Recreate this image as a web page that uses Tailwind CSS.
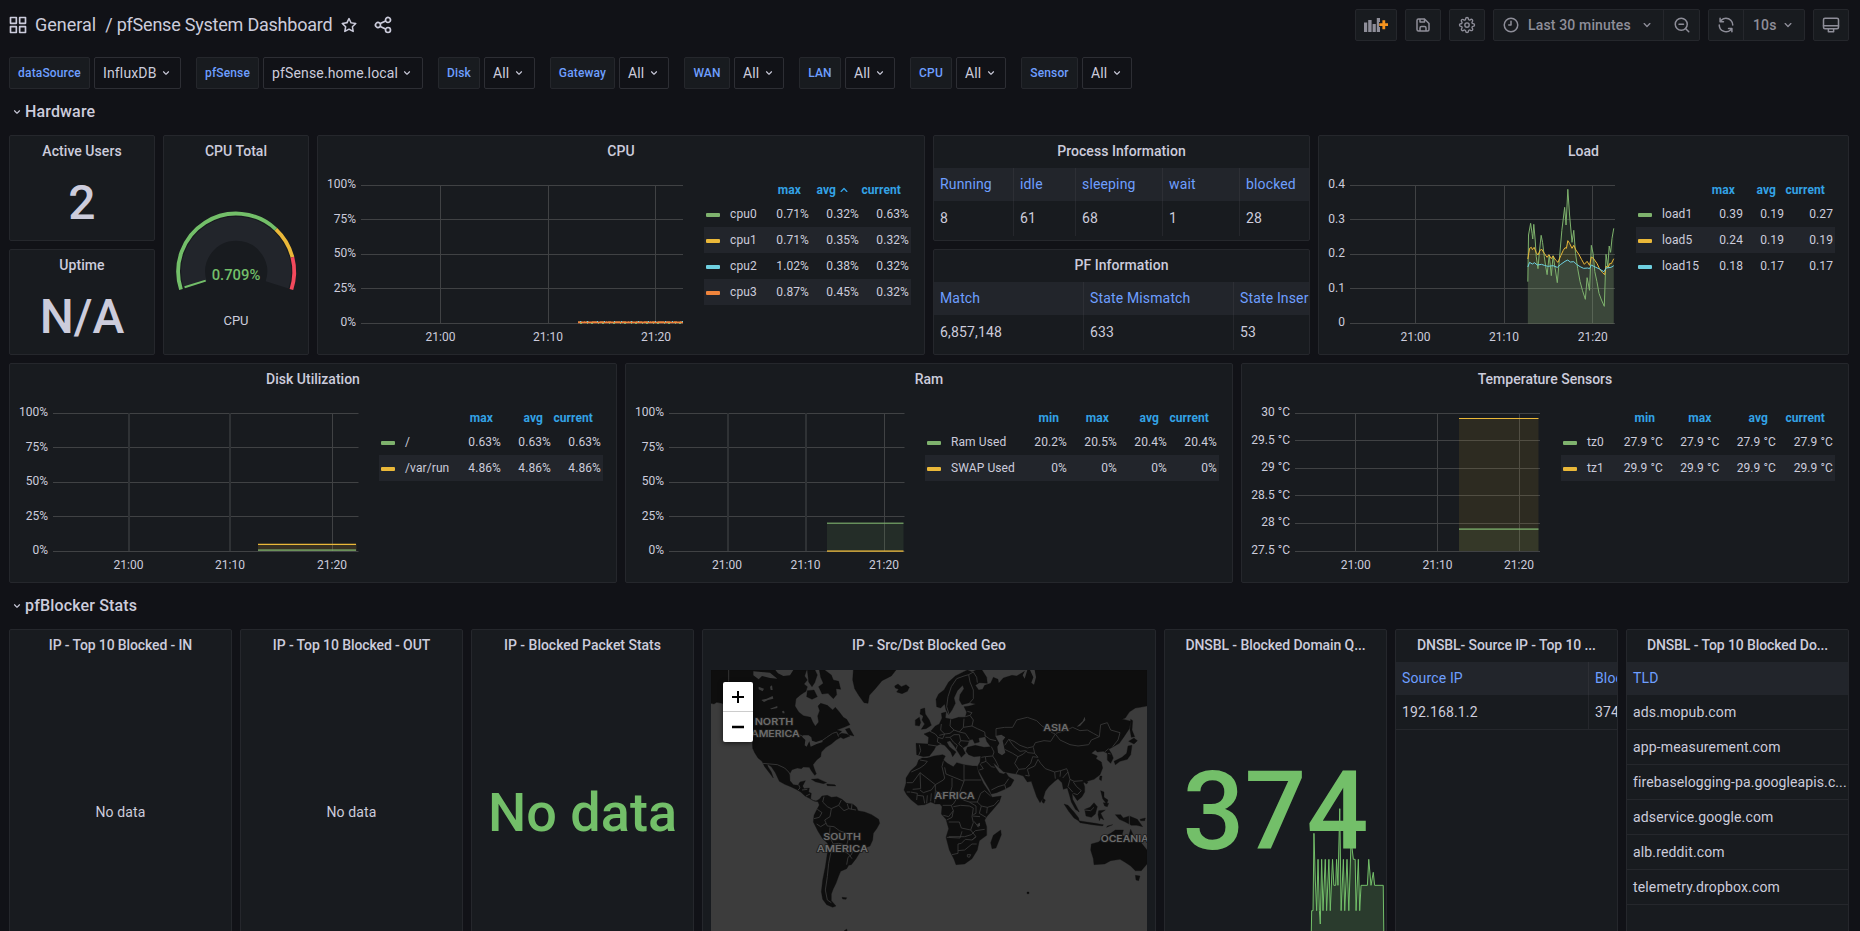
<!DOCTYPE html>
<html lang="en">
<head>
<meta charset="utf-8">
<title>pfSense System Dashboard</title>
<script src="https://cdn.jsdelivr.net/npm/@tailwindcss/browser@4"></script>
</head>
<body class="h-[931px] w-[1860px] overflow-hidden bg-[#111217] font-['Roboto',sans-serif] text-sm tracking-[0.15px] text-[#ccccdc]">

<!-- Icon sprite -->
<svg class="hidden">
  <symbol id="apps" viewBox="0 0 24 24"><path d="M10,13H3a1,1,0,0,0-1,1v7a1,1,0,0,0,1,1h7a1,1,0,0,0,1-1V14A1,1,0,0,0,10,13ZM9,20H4V15H9ZM21,2H14a1,1,0,0,0-1,1v7a1,1,0,0,0,1,1h7a1,1,0,0,0,1-1V3A1,1,0,0,0,21,2ZM20,9H15V4h5Zm1,4H14a1,1,0,0,0-1,1v7a1,1,0,0,0,1,1h7a1,1,0,0,0,1-1V14A1,1,0,0,0,21,13Zm-1,7H15V15h5ZM10,2H3A1,1,0,0,0,2,3v7a1,1,0,0,0,1,1h7a1,1,0,0,0,1-1V3A1,1,0,0,0,10,2ZM9,9H4V4H9Z"/></symbol>
  <symbol id="star" viewBox="0 0 24 24"><path d="M22,9.67A1,1,0,0,0,21.14,9l-5.69-.83L12.9,3a1,1,0,0,0-1.8,0L8.55,8.16,2.86,9a1,1,0,0,0-.81.68,1,1,0,0,0,.25,1l4.13,4-1,5.68A1,1,0,0,0,6.9,21.44L12,18.77l5.1,2.67a.93.93,0,0,0,.46.12,1,1,0,0,0,.59-.19,1,1,0,0,0,.4-1l-1-5.68,4.13-4A1,1,0,0,0,22,9.67Zm-6.15,4a1,1,0,0,0-.29.88l.72,4.2-3.76-2a1.06,1.06,0,0,0-.94,0l-3.76,2,.72-4.2a1,1,0,0,0-.29-.88l-3-3,4.21-.61a1,1,0,0,0,.76-.55L12,5.7l1.88,3.82a1,1,0,0,0,.76.55l4.21.61Z"/></symbol>
  <symbol id="share" viewBox="0 0 24 24"><path d="M18,14a4,4,0,0,0-3.08,1.48l-5.1-2.35a3.64,3.64,0,0,0,0-2.26l5.1-2.35A4,4,0,1,0,14,6a4.17,4.17,0,0,0,.07.71L8.79,9.14a4,4,0,1,0,0,5.72l5.28,2.43A4.17,4.17,0,0,0,14,18a4,4,0,1,0,4-4ZM18,4a2,2,0,1,1-2,2A2,2,0,0,1,18,4ZM6,14a2,2,0,1,1,2-2A2,2,0,0,1,6,14Zm12,6a2,2,0,1,1,2-2A2,2,0,0,1,18,20Z"/></symbol>
  <symbol id="down" viewBox="0 0 24 24"><path d="M17,9.17a1,1,0,0,0-1.41,0L12,12.71,8.46,9.17a1,1,0,0,0-1.41,0,1,1,0,0,0,0,1.42l4.24,4.24a1,1,0,0,0,1.42,0L17,10.59A1,1,0,0,0,17,9.17Z"/></symbol>
  <symbol id="save" viewBox="0 0 24 24"><path d="m20.71 9.29-6-6a1 1 0 0 0-.32-.21A1.09 1.09 0 0 0 14 3H6a3 3 0 0 0-3 3v12a3 3 0 0 0 3 3h12a3 3 0 0 0 3-3v-8a1 1 0 0 0-.29-.71ZM9 5h4v2H9Zm6 14H9v-3a1 1 0 0 1 1-1h4a1 1 0 0 1 1 1Zm4-1a1 1 0 0 1-1 1h-1v-3a3 3 0 0 0-3-3h-4a3 3 0 0 0-3 3v3H6a1 1 0 0 1-1-1V6a1 1 0 0 1 1-1h1v3a1 1 0 0 0 1 1h6a1 1 0 0 0 1-1V6.41l4 4Z"/></symbol>
  <symbol id="cog" viewBox="0 0 24 24"><g fill="none" stroke="currentColor" stroke-width="2" stroke-linejoin="round" transform="translate(1.1 1.1) scale(.91)"><circle cx="12" cy="12" r="3.2"/><path d="M19.4 15a1.65 1.65 0 0 0 .33 1.82l.06.06a2 2 0 0 1 0 2.83 2 2 0 0 1-2.83 0l-.06-.06a1.65 1.65 0 0 0-1.82-.33 1.65 1.65 0 0 0-1 1.51V21a2 2 0 0 1-2 2 2 2 0 0 1-2-2v-.09A1.65 1.65 0 0 0 9 19.4a1.65 1.65 0 0 0-1.82.33l-.06.06a2 2 0 0 1-2.83 0 2 2 0 0 1 0-2.83l.06-.06a1.65 1.65 0 0 0 .33-1.82 1.65 1.65 0 0 0-1.51-1H3a2 2 0 0 1-2-2 2 2 0 0 1 2-2h.09A1.65 1.65 0 0 0 4.6 9a1.65 1.65 0 0 0-.33-1.82l-.06-.06a2 2 0 0 1 0-2.83 2 2 0 0 1 2.83 0l.06.06a1.65 1.65 0 0 0 1.82.33H9a1.65 1.65 0 0 0 1-1.51V3a2 2 0 0 1 2-2 2 2 0 0 1 2 2v.09a1.65 1.65 0 0 0 1 1.51 1.65 1.65 0 0 0 1.82-.33l.06-.06a2 2 0 0 1 2.83 0 2 2 0 0 1 0 2.83l-.06.06a1.65 1.65 0 0 0-.33 1.82V9a1.65 1.65 0 0 0 1.51 1H21a2 2 0 0 1 2 2 2 2 0 0 1-2 2h-.09a1.65 1.65 0 0 0-1.51 1z"/></g></symbol>
  <symbol id="clock" viewBox="0 0 24 24"><g fill="none" stroke="currentColor" stroke-width="2" stroke-linecap="round" stroke-linejoin="round"><circle cx="12" cy="12" r="9"/><path d="M12 7v5H9"/></g></symbol>
  <symbol id="zoomout" viewBox="0 0 24 24"><g fill="none" stroke="currentColor" stroke-width="2" stroke-linecap="round"><circle cx="11" cy="11" r="8"/><path d="M17 17l4 4M8 11h6"/></g></symbol>
  <symbol id="sync" viewBox="0 0 24 24"><path d="M19.91,15.51H15.38a1,1,0,0,0,0,2h2.4A8,8,0,0,1,4,12a1,1,0,0,0-2,0,10,10,0,0,0,16.88,7.23V21a1,1,0,0,0,2,0V16.5A1,1,0,0,0,19.91,15.51ZM12,2A10,10,0,0,0,5.12,4.77V3a1,1,0,0,0-2,0V7.5a1,1,0,0,0,1,1h4.5a1,1,0,0,0,0-2H6.22A8,8,0,0,1,20,12a1,1,0,0,0,2,0A10,10,0,0,0,12,2Z"/></symbol>
  <symbol id="monitor" viewBox="0 0 24 24"><g fill="none" stroke="currentColor" stroke-width="2" stroke-linecap="round" stroke-linejoin="round"><rect x="2" y="3" width="20" height="14" rx="2"/><path d="M2 13h20M8.500 17v4h7v-4"/></g></symbol>
</svg>

<!-- Toolbar -->
<header class="flex h-[49px] items-center pr-[11px] pl-2">
  <svg class="size-5 fill-current"><use href="#apps"/></svg>
  <div class="ml-[7px] text-[18px] leading-6 tracking-normal whitespace-pre">General</div>
  <div class="ml-[9px] text-[18px] leading-6 tracking-[-0.22px]">/ pfSense System Dashboard</div>
  <svg class="ml-2 size-[18px] fill-current"><use href="#star"/></svg>
  <svg class="ml-[15px] size-5 fill-current"><use href="#share"/></svg>
  <div class="ml-auto flex items-center gap-2 font-medium text-[#8e8e99]">
    <div class="flex h-8 w-[42px] items-center justify-center rounded-xs border border-[#25272c] bg-[#181b1f]">
      <svg class="h-4 w-6" viewBox="0 0 24 16"><path class="fill-[#8e8e99]" d="M0 5.500h3.200V15H0zM4.200 3h3.400v12H4.200zM8.600 7h3.200v8H8.600zM12.800 1h3.200v4h-1v5h1v5h-3.200z"/><path d="M19.800 3.200v9M15.300 7.700h9" class="stroke-[#f7941e]" stroke-width="2.800"/></svg>
    </div>
    <div class="flex h-8 w-9 items-center justify-center rounded-xs border border-[#25272c] bg-[#181b1f]"><svg class="size-[18px] fill-current"><use href="#save"/></svg></div>
    <div class="flex h-8 w-9 items-center justify-center rounded-xs border border-[#25272c] bg-[#181b1f]"><svg class="size-[18px] fill-current"><use href="#cog"/></svg></div>
    <div class="flex h-8 rounded-xs border border-[#25272c] bg-[#181b1f]">
      <div class="flex w-[170px] items-center border-r border-[#25272c] pl-2">
        <svg class="size-[18px] fill-current"><use href="#clock"/></svg>
        <span class="ml-2">Last 30 minutes</span>
        <svg class="mr-2 ml-auto size-4 fill-current"><use href="#down"/></svg>
      </div>
      <div class="flex w-[35px] items-center justify-center"><svg class="size-[18px] fill-current"><use href="#zoomout"/></svg></div>
    </div>
    <div class="flex h-8 rounded-xs border border-[#25272c] bg-[#181b1f]">
      <div class="flex w-[35px] items-center justify-center border-r border-[#25272c]"><svg class="size-[18px] fill-current"><use href="#sync"/></svg></div>
      <div class="flex w-[60px] items-center pl-[9px]">10s<svg class="mr-2 ml-auto size-4 fill-current"><use href="#down"/></svg></div>
    </div>
    <div class="flex h-8 w-9 items-center justify-center rounded-xs border border-[#25272c] bg-[#181b1f]"><svg class="size-[18px] fill-current"><use href="#monitor"/></svg></div>
  </div>
</header>

<!-- Template variables -->
<nav class="mt-2 flex h-8 gap-[15px] pl-[9px]">
  <div class="flex gap-1"><div class="flex w-[81px] items-center justify-center rounded-xs border border-[#25272c] bg-[#181b1f] text-xs font-medium text-[#6e9fff]">dataSource</div><div class="flex w-[87px] items-center rounded-xs border border-[#2d2e34] pl-2">InfluxDB<svg class="ml-0.5 size-3.5 fill-current"><use href="#down"/></svg></div></div>
  <div class="flex gap-1"><div class="flex w-[63px] items-center justify-center rounded-xs border border-[#25272c] bg-[#181b1f] text-xs font-medium text-[#6e9fff]">pfSense</div><div class="flex w-[160px] items-center rounded-xs border border-[#2d2e34] pl-2">pfSense.home.local<svg class="ml-0.5 size-3.5 fill-current"><use href="#down"/></svg></div></div>
  <div class="flex gap-1"><div class="flex w-[42px] items-center justify-center rounded-xs border border-[#25272c] bg-[#181b1f] text-xs font-medium text-[#6e9fff]">Disk</div><div class="flex w-[51px] items-center rounded-xs border border-[#2d2e34] pl-2">All<svg class="ml-[3px] size-3.5 fill-current"><use href="#down"/></svg></div></div>
  <div class="flex gap-1"><div class="flex w-[65px] items-center justify-center rounded-xs border border-[#25272c] bg-[#181b1f] text-xs font-medium text-[#6e9fff]">Gateway</div><div class="flex w-[50px] items-center rounded-xs border border-[#2d2e34] pl-2">All<svg class="ml-[3px] size-3.5 fill-current"><use href="#down"/></svg></div></div>
  <div class="flex gap-1"><div class="flex w-[46px] items-center justify-center rounded-xs border border-[#25272c] bg-[#181b1f] text-xs font-medium text-[#6e9fff]">WAN</div><div class="flex w-[50px] items-center rounded-xs border border-[#2d2e34] pl-2">All<svg class="ml-[3px] size-3.5 fill-current"><use href="#down"/></svg></div></div>
  <div class="flex gap-1"><div class="flex w-[42px] items-center justify-center rounded-xs border border-[#25272c] bg-[#181b1f] text-xs font-medium text-[#6e9fff]">LAN</div><div class="flex w-[50px] items-center rounded-xs border border-[#2d2e34] pl-2">All<svg class="ml-[3px] size-3.5 fill-current"><use href="#down"/></svg></div></div>
  <div class="flex gap-1"><div class="flex w-[42px] items-center justify-center rounded-xs border border-[#25272c] bg-[#181b1f] text-xs font-medium text-[#6e9fff]">CPU</div><div class="flex w-[50px] items-center rounded-xs border border-[#2d2e34] pl-2">All<svg class="ml-[3px] size-3.5 fill-current"><use href="#down"/></svg></div></div>
  <div class="flex gap-1"><div class="flex w-[57px] items-center justify-center rounded-xs border border-[#25272c] bg-[#181b1f] text-xs font-medium text-[#6e9fff]">Sensor</div><div class="flex w-[50px] items-center rounded-xs border border-[#2d2e34] pl-2">All<svg class="ml-[3px] size-3.5 fill-current"><use href="#down"/></svg></div></div>
</nav>

<!-- Dashboard grid: 24 columns, 30px rows -->
<main class="mt-2 mr-[11px] ml-[9px] grid auto-rows-[30px] grid-cols-24 gap-2">

  <div class="col-span-24 flex items-center text-base font-medium"><svg class="mr-px ml-px size-3.5 fill-current"><use href="#down"/></svg>Hardware</div>

  <section class="col-span-2 row-span-3 flex flex-col overflow-hidden rounded-xs border border-[#25272c] bg-[#181b1f]">
    <h2 class="flex h-8 items-center justify-center pb-0.5 font-medium tracking-[0.05px]">Active Users</h2>
    <div class="flex h-[70px] items-center justify-center text-[48px] leading-none font-medium tracking-normal">2</div>
  </section>

  <section class="col-span-2 row-span-6 overflow-hidden rounded-xs border border-[#25272c] bg-[#181b1f]">
    <h2 class="flex h-8 items-center justify-center pb-0.5 font-medium tracking-[0.05px]">CPU Total</h2>
    <svg class="h-[186px] w-[144px]" viewBox="164 168 144 186">
      <g fill="none">
        <path class="stroke-[#22252b]" stroke-width="24" d="M195.300 284.900A43 43 0 1 1 277.100 284.900"/>
        <path class="stroke-[#73bf69]" stroke-width="3.800" d="M181 289.500A58 58 0 0 1 275.900 229.300"/>
        <path class="stroke-[#eab839]" stroke-width="3.800" d="M275.900 229.300A58 58 0 0 1 292.400 257.200"/>
        <path class="stroke-[#f2495c]" stroke-width="3.800" d="M292.400 257.200A58 58 0 0 1 291.400 289.500"/>
        <path class="stroke-[#73bf69]" stroke-width="2" d="M184.600 287.300L205.700 280.600"/>
      </g>
      <text x="236" y="279.500" text-anchor="middle" class="fill-[#73bf69] text-[14.8px] font-medium tracking-normal">0.709%</text>
      <text x="236" y="325.300" text-anchor="middle" class="fill-[#ccccdc] text-[13px] tracking-normal">CPU</text>
    </svg>
  </section>

  <section class="col-span-8 row-span-6 overflow-hidden rounded-xs border border-[#25272c] bg-[#181b1f]">
    <h2 class="flex h-8 items-center justify-center pb-0.5 font-medium tracking-[0.05px]">CPU</h2>
    <div class="flex text-xs tracking-[0.1px]">
      <svg class="h-[186px] w-[386px]" viewBox="318 168 386 186">
        <path class="stroke-[#404244]" d="M361 185.500H683M361 219.500H683M361 254.500H683M361 288.500H683M361 323.500H683M440.500 185V323M548.500 185V323M655.500 185V323"/>
        <path fill="none" class="stroke-[#ef843c]" stroke-width="1.600" d="M578 322.400H683"/>
        <path fill="none" class="stroke-[#b5703a]" stroke-width="1" stroke-dasharray="4 2 1 1 3 3 6 2" d="M578 321.500H683"/>
        <path fill="none" class="stroke-[#6ed0e0]" stroke-width="1" stroke-dasharray="1 6 1 9" d="M580 321.500H683"/>
        <path fill="none" class="stroke-[#7eb26d]" stroke-width="1" stroke-dasharray="2 5 1 3" d="M580 323.500H683"/>
        <g class="fill-[#ccccdc] tracking-normal">
          <g text-anchor="end"><text x="356" y="187.800">100%</text><text x="356" y="222.600">75%</text><text x="356" y="256.800">50%</text><text x="356" y="291.600">25%</text><text x="356" y="325.700">0%</text></g>
          <g text-anchor="middle"><text x="440.500" y="341">21:00</text><text x="548" y="341">21:10</text><text x="656" y="341">21:20</text></g>
        </g>
      </svg>
      <div class="mt-[11px] w-[207px]">
        <div class="grid h-[22px] grid-cols-[57px_50px_50px_50px] items-center text-right font-bold text-[#33a2e5]"><i></i><span class="pr-[10px]">max</span><span class="flex items-center justify-end pr-[9px]">avg<svg class="size-4 rotate-180 fill-current"><use href="#down"/></svg></span><span class="pr-[10px]">current</span></div>
        <div class="grid h-[26px] grid-cols-[26px_31px_50px_50px_50px] items-center text-right"><i class="mt-px ml-0.5 h-1 w-[14px] rounded-[1px] bg-[#7eb26d]"></i><span class="text-left">cpu0</span><span class="pr-0.5">0.71%</span><span class="pr-0.5">0.32%</span><span class="pr-0.5">0.63%</span></div>
        <div class="grid h-[26px] grid-cols-[26px_31px_50px_50px_50px] items-center bg-[#22252b] text-right"><i class="mt-px ml-0.5 h-1 w-[14px] rounded-[1px] bg-[#eab839]"></i><span class="text-left">cpu1</span><span class="pr-0.5">0.71%</span><span class="pr-0.5">0.35%</span><span class="pr-0.5">0.32%</span></div>
        <div class="grid h-[26px] grid-cols-[26px_31px_50px_50px_50px] items-center text-right"><i class="mt-px ml-0.5 h-1 w-[14px] rounded-[1px] bg-[#6ed0e0]"></i><span class="text-left">cpu2</span><span class="pr-0.5">1.02%</span><span class="pr-0.5">0.38%</span><span class="pr-0.5">0.32%</span></div>
        <div class="grid h-[26px] grid-cols-[26px_31px_50px_50px_50px] items-center bg-[#22252b] text-right"><i class="mt-px ml-0.5 h-1 w-[14px] rounded-[1px] bg-[#ef843c]"></i><span class="text-left">cpu3</span><span class="pr-0.5">0.87%</span><span class="pr-0.5">0.45%</span><span class="pr-0.5">0.32%</span></div>
      </div>
    </div>
  </section>

  <section class="col-span-5 row-span-3 overflow-hidden rounded-xs border border-[#25272c] bg-[#181b1f]">
    <h2 class="flex h-8 items-center justify-center pb-0.5 font-medium tracking-[0.05px]">Process Information</h2>
    <div class="grid h-[33px] grid-cols-[80px_62px_87px_77px_1fr] bg-[#22252b] leading-[33px] text-[#6e9fff]"><div class="border-r border-[#2d2f35] pl-1.5">Running</div><div class="border-r border-[#2d2f35] pl-1.5">idle</div><div class="border-r border-[#2d2f35] pl-1.5">sleeping</div><div class="border-r border-[#2d2f35] pl-1.5">wait</div><div class="pl-1.5">blocked</div></div>
    <div class="grid h-[27px] grid-cols-[80px_62px_87px_77px_1fr] leading-[35px]"><div class="border-r border-[#25272c] pl-1.5">8</div><div class="border-r border-[#25272c] pl-1.5">61</div><div class="border-r border-[#25272c] pl-1.5">68</div><div class="border-r border-[#25272c] pl-1.5">1</div><div class="pl-1.5">28</div></div>
  </section>

  <section class="col-span-7 row-span-6 overflow-hidden rounded-xs border border-[#25272c] bg-[#181b1f]">
    <h2 class="flex h-8 items-center justify-center pb-0.5 font-medium tracking-[0.05px]">Load</h2>
    <div class="flex text-xs tracking-[0.1px]">
      <svg class="h-[186px] w-[317px]" viewBox="1319 168 317 186">
        <path class="stroke-[#404244]" d="M1350 185.500H1615M1350 219.500H1615M1350 254.500H1615M1350 288.500H1615M1350 323.500H1615M1415.500 185V323M1504.500 185V323M1592.500 185V323"/>
        <svg x="1310" y="125" width="550" height="240" viewBox="0 0 1568 720" preserveAspectRatio="none" fill-opacity=".1" stroke-linejoin="round">
          <path class="fill-[#7eb26d]" d="M621 596V470L623 330L629 295L633 325L635 342L638 298L642 345L645 395L650 431L654 380L659 331L663 352L668 395L672 425L676 449L682 390L688 452L693 392L699 430L705 473L712 390L718 316L726 247L730 300L735 193L740 270L747 352L752 316L757 385L763 430L770 470L777 497L785 523L790 458L797 496L802 361L807 385L812 440L818 470L824 505L831 525L839 544L844 388L849 425L853 363L857 382L861 340L866 310V596Z"/>
          <path class="fill-[#eab839]" d="M621 596V402L626 370L631 367L634 374L639 367L645 383L650 390L655 378L660 372L668 385L676 397L681 389L688 401L693 393L700 405L707 412L715 392L722 376L727 368L731 370L735 347L740 355L747 370L752 361L758 375L766 387L774 403L782 418L790 409L797 421L802 396L808 400L818 415L825 430L834 443L840 449L844 424L850 428L854 416L859 416L866 401V596Z"/>
          <path class="fill-[#6ed0e0]" d="M621 596V426L626 412L634 417L640 413L648 420L660 418L668 421L678 424L693 422L705 427L715 418L727 409L735 405L742 411L752 410L760 418L770 425L780 430L792 429L797 431L802 420L815 427L825 432L838 440L844 429L858 427L866 422V596Z"/>
          <g fill="none">
            <path vector-effect="non-scaling-stroke" class="stroke-[#7eb26d]" d="M621 470L623 330L629 295L633 325L635 342L638 298L642 345L645 395L650 431L654 380L659 331L663 352L668 395L672 425L676 449L682 390L688 452L693 392L699 430L705 473L712 390L718 316L726 247L730 300L735 193L740 270L747 352L752 316L757 385L763 430L770 470L777 497L785 523L790 458L797 496L802 361L807 385L812 440L818 470L824 505L831 525L839 544L844 388L849 425L853 363L857 382L861 340L866 310"/>
            <path vector-effect="non-scaling-stroke" class="stroke-[#eab839]" d="M621 402L626 370L631 367L634 374L639 367L645 383L650 390L655 378L660 372L668 385L676 397L681 389L688 401L693 393L700 405L707 412L715 392L722 376L727 368L731 370L735 347L740 355L747 370L752 361L758 375L766 387L774 403L782 418L790 409L797 421L802 396L808 400L818 415L825 430L834 443L840 449L844 424L850 428L854 416L859 416L866 401"/>
            <path vector-effect="non-scaling-stroke" class="stroke-[#6ed0e0]" d="M621 426L626 412L634 417L640 413L648 420L660 418L668 421L678 424L693 422L705 427L715 418L727 409L735 405L742 411L752 410L760 418L770 425L780 430L792 429L797 431L802 420L815 427L825 432L838 440L844 429L858 427L866 422"/>
          </g>
        </svg>
        <g class="fill-[#ccccdc] tracking-normal">
          <g text-anchor="end"><text x="1345" y="187.800">0.4</text><text x="1345" y="222.600">0.3</text><text x="1345" y="256.800">0.2</text><text x="1345" y="291.600">0.1</text><text x="1345" y="325.700">0</text></g>
          <g text-anchor="middle"><text x="1415.500" y="341">21:00</text><text x="1504" y="341">21:10</text><text x="1592.800" y="341">21:20</text></g>
        </g>
      </svg>
      <div class="mt-[11px] w-[199px]">
        <div class="grid h-[22px] grid-cols-[109px_41px_49px] items-center text-right font-bold text-[#33a2e5]"><span class="pr-[10px]">max</span><span class="pr-[10px]">avg</span><span class="-ml-1 pr-[10px]">current</span></div>
        <div class="grid h-[26px] grid-cols-[26px_83px_41px_49px] items-center text-right"><i class="mt-px ml-0.5 h-1 w-[14px] rounded-[1px] bg-[#7eb26d]"></i><span class="flex justify-between pr-0.5"><b class="font-normal">load1</b>0.39</span><span class="pr-0.5">0.19</span><span class="pr-0.5">0.27</span></div>
        <div class="grid h-[26px] grid-cols-[26px_83px_41px_49px] items-center bg-[#22252b] text-right"><i class="mt-px ml-0.5 h-1 w-[14px] rounded-[1px] bg-[#eab839]"></i><span class="flex justify-between pr-0.5"><b class="font-normal">load5</b>0.24</span><span class="pr-0.5">0.19</span><span class="pr-0.5">0.19</span></div>
        <div class="grid h-[26px] grid-cols-[26px_83px_41px_49px] items-center text-right"><i class="mt-px ml-0.5 h-1 w-[14px] rounded-[1px] bg-[#6ed0e0]"></i><span class="flex justify-between pr-0.5"><b class="font-normal">load15</b>0.18</span><span class="pr-0.5">0.17</span><span class="pr-0.5">0.17</span></div>
      </div>
    </div>
  </section>

  <section class="col-span-2 row-span-3 flex flex-col overflow-hidden rounded-xs border border-[#25272c] bg-[#181b1f]">
    <h2 class="flex h-8 items-center justify-center pb-0.5 font-medium tracking-[0.05px]">Uptime</h2>
    <div class="flex h-[70px] items-center justify-center text-[48px] leading-none font-medium tracking-normal">N/A</div>
  </section>

  <section class="col-span-5 row-span-3 overflow-hidden rounded-xs border border-[#25272c] bg-[#181b1f]">
    <h2 class="flex h-8 items-center justify-center pb-0.5 font-medium tracking-[0.05px]">PF Information</h2>
    <div class="grid h-[33px] grid-cols-[150px_150px_1fr] overflow-hidden bg-[#22252b] leading-[33px] whitespace-nowrap text-[#6e9fff]"><div class="border-r border-[#2d2f35] pl-1.5">Match</div><div class="border-r border-[#2d2f35] pl-1.5">State Mismatch</div><div class="overflow-hidden pl-1.5">State Inser</div></div>
    <div class="grid h-[27px] grid-cols-[150px_150px_1fr] leading-[35px]"><div class="border-r border-[#25272c] pl-1.5">6,857,148</div><div class="border-r border-[#25272c] pl-1.5">633</div><div class="pl-1.5">53</div></div>
  </section>

  <section class="col-span-8 row-span-6 overflow-hidden rounded-xs border border-[#25272c] bg-[#181b1f]">
    <h2 class="flex h-8 items-center justify-center pb-0.5 font-medium tracking-normal">Disk Utilization</h2>
    <div class="flex text-xs tracking-[0.1px]">
      <svg class="h-[186px] w-[369px]" viewBox="10 396 369 186">
        <path class="stroke-[#404244]" d="M53 413.500H358.500M53 447.500H358.500M53 482.500H358.500M53 516.500H358.500M53 551.500H358.500M332.500 413V551"/>
        <path class="stroke-[#2f3235]" stroke-width="2" d="M129 413V551M230 413V551"/>
        <rect x="258" y="544" width="98.500" height="7" class="fill-[#eab839]/15"/>
        <path class="stroke-[#eab839]" stroke-width="1.200" d="M258 544.300H356"/>
        <path class="stroke-[#7eb26d]" stroke-opacity=".75" stroke-width="1.800" d="M258 550.100H356"/>
        <g class="fill-[#ccccdc] tracking-normal">
          <g text-anchor="end"><text x="48" y="415.800">100%</text><text x="48" y="450.600">75%</text><text x="48" y="484.800">50%</text><text x="48" y="519.600">25%</text><text x="48" y="553.700">0%</text></g>
          <g text-anchor="middle"><text x="128.500" y="569">21:00</text><text x="230" y="569">21:10</text><text x="332" y="569">21:20</text></g>
        </g>
      </svg>
      <div class="mt-[11px] w-[224px]">
        <div class="grid h-[22px] grid-cols-[1fr_50px_50px] items-center text-right font-bold text-[#33a2e5]"><span class="pr-[10px]">max</span><span class="pr-[10px]">avg</span><span class="pr-[10px]">current</span></div>
        <div class="grid h-[26px] grid-cols-[26px_48px_50px_50px_50px] items-center text-right"><i class="mt-px ml-0.5 h-1 w-[14px] rounded-[1px] bg-[#7eb26d]"></i><span class="text-left">/</span><span class="pr-0.5">0.63%</span><span class="pr-0.5">0.63%</span><span class="pr-0.5">0.63%</span></div>
        <div class="grid h-[26px] grid-cols-[26px_48px_50px_50px_50px] items-center bg-[#22252b] text-right"><i class="mt-px ml-0.5 h-1 w-[14px] rounded-[1px] bg-[#eab839]"></i><span class="text-left">/var/run</span><span class="pr-0.5">4.86%</span><span class="pr-0.5">4.86%</span><span class="pr-0.5">4.86%</span></div>
      </div>
    </div>
  </section>

  <section class="col-span-8 row-span-6 overflow-hidden rounded-xs border border-[#25272c] bg-[#181b1f]">
    <h2 class="flex h-8 items-center justify-center pb-0.5 font-medium tracking-[0.05px]">Ram</h2>
    <div class="flex text-xs tracking-[0.1px]">
      <svg class="h-[186px] w-[299px]" viewBox="626 396 299 186">
        <path class="stroke-[#404244]" d="M669 413.500H904.500M669 447.500H904.500M669 482.500H904.500M669 516.500H904.500M669 551.500H904.500M884.500 413V551"/>
        <path class="stroke-[#2f3235]" stroke-width="2" d="M728 413V551M806 413V551"/>
        <rect x="827" y="523" width="76.500" height="28" class="fill-[#7eb26d]/12"/>
        <path class="stroke-[#7eb26d]" stroke-opacity=".75" stroke-width="1.600" d="M827 523.200H903.500"/>
        <path class="stroke-[#eab839]" stroke-opacity=".75" stroke-width="1.800" d="M827 551.100H903.500"/>
        <g class="fill-[#ccccdc] tracking-normal">
          <g text-anchor="end"><text x="664" y="415.800">100%</text><text x="664" y="450.600">75%</text><text x="664" y="484.800">50%</text><text x="664" y="519.600">25%</text><text x="664" y="553.700">0%</text></g>
          <g text-anchor="middle"><text x="727" y="569">21:00</text><text x="805.500" y="569">21:10</text><text x="884" y="569">21:20</text></g>
        </g>
      </svg>
      <div class="mt-[11px] w-[294px]">
        <div class="grid h-[22px] grid-cols-[1fr_50px_50px_50px] items-center text-right font-bold text-[#33a2e5]"><span class="pr-[10px]">min</span><span class="pr-[10px]">max</span><span class="pr-[10px]">avg</span><span class="pr-[10px]">current</span></div>
        <div class="grid h-[26px] grid-cols-[26px_68px_50px_50px_50px_50px] items-center text-right"><i class="mt-px ml-0.5 h-1 w-[14px] rounded-[1px] bg-[#7eb26d]"></i><span class="text-left">Ram Used</span><span class="pr-0.5">20.2%</span><span class="pr-0.5">20.5%</span><span class="pr-0.5">20.4%</span><span class="pr-0.5">20.4%</span></div>
        <div class="grid h-[26px] grid-cols-[26px_68px_50px_50px_50px_50px] items-center bg-[#22252b] text-right"><i class="mt-px ml-0.5 h-1 w-[14px] rounded-[1px] bg-[#eab839]"></i><span class="text-left">SWAP Used</span><span class="pr-0.5">0%</span><span class="pr-0.5">0%</span><span class="pr-0.5">0%</span><span class="pr-0.5">0%</span></div>
      </div>
    </div>
  </section>

  <section class="col-span-8 row-span-6 overflow-hidden rounded-xs border border-[#25272c] bg-[#181b1f]">
    <h2 class="flex h-8 items-center justify-center pb-0.5 font-medium tracking-normal">Temperature Sensors</h2>
    <div class="flex text-xs tracking-[0.1px]">
      <svg class="h-[186px] w-[319px]" viewBox="1242 396 319 186">
        <path class="stroke-[#404244]" d="M1295 413.500H1540M1295 440.500H1540M1295 468.500H1540M1295 495.500H1540M1295 523.500H1540M1295 551.500H1540M1355.500 413V551M1437.500 413V551M1519.500 413V551"/>
        <rect x="1459" y="418.500" width="79.500" height="132.500" class="fill-[#eab839]/10"/>
        <rect x="1459" y="529" width="79.500" height="22" class="fill-[#7eb26d]/10"/>
        <path class="stroke-[#eab839]" stroke-width="1" d="M1459 418.500H1538.500"/>
        <path class="stroke-[#7eb26d]" stroke-opacity=".75" stroke-width="1.800" d="M1459 529.100H1538.500"/>
        <g class="fill-[#ccccdc] tracking-normal">
          <g text-anchor="end"><text x="1290" y="415.800">30 °C</text><text x="1290" y="443.600">29.5 °C</text><text x="1290" y="470.800">29 °C</text><text x="1290" y="498.600">28.5 °C</text><text x="1290" y="526.300">28 °C</text><text x="1290" y="553.700">27.5 °C</text></g>
          <g text-anchor="middle"><text x="1355.700" y="569">21:00</text><text x="1437.500" y="569">21:10</text><text x="1519" y="569">21:20</text></g>
        </g>
      </svg>
      <div class="mt-[11px] w-[274px]">
        <div class="grid h-[22px] grid-cols-[1fr_56.5px_56.5px_57px] items-center text-right font-bold text-[#33a2e5]"><span class="pr-[10px]">min</span><span class="pr-[10px]">max</span><span class="pr-[10px]">avg</span><span class="pr-[10px]">current</span></div>
        <div class="grid h-[26px] grid-cols-[26px_1fr_56.5px_56.5px_57px] items-center text-right"><i class="mt-px ml-0.5 h-1 w-[14px] rounded-[1px] bg-[#7eb26d]"></i><span class="flex justify-between pr-0.5"><b class="font-normal">tz0</b>27.9 °C</span><span class="pr-0.5">27.9 °C</span><span class="pr-0.5">27.9 °C</span><span class="pr-0.5">27.9 °C</span></div>
        <div class="grid h-[26px] grid-cols-[26px_1fr_56.5px_56.5px_57px] items-center bg-[#22252b] text-right"><i class="mt-px ml-0.5 h-1 w-[14px] rounded-[1px] bg-[#eab839]"></i><span class="flex justify-between pr-0.5"><b class="font-normal">tz1</b>29.9 °C</span><span class="pr-0.5">29.9 °C</span><span class="pr-0.5">29.9 °C</span><span class="pr-0.5">29.9 °C</span></div>
      </div>
    </div>
  </section>

  <div class="col-span-24 flex items-center text-base font-medium"><svg class="mr-px ml-px size-3.5 fill-current"><use href="#down"/></svg>pfBlocker Stats</div>

  <section class="col-span-3 row-span-9 overflow-hidden rounded-xs border border-[#25272c] bg-[#181b1f]">
    <h2 class="flex h-8 items-center justify-center pb-0.5 font-medium tracking-[-0.13px]">IP - Top 10 Blocked - IN</h2>
    <div class="flex h-[300px] items-center justify-center">No data</div>
  </section>
  <section class="col-span-3 row-span-9 overflow-hidden rounded-xs border border-[#25272c] bg-[#181b1f]">
    <h2 class="flex h-8 items-center justify-center pb-0.5 font-medium tracking-[-0.1px]">IP - Top 10 Blocked - OUT</h2>
    <div class="flex h-[300px] items-center justify-center">No data</div>
  </section>
  <section class="col-span-3 row-span-9 overflow-hidden rounded-xs border border-[#25272c] bg-[#181b1f]">
    <h2 class="flex h-8 items-center justify-center pb-0.5 font-medium tracking-[-0.02px]">IP - Blocked Packet Stats</h2>
    <div class="flex h-[302px] items-center justify-center text-[54px] font-medium tracking-normal text-[#73bf69]">No data</div>
  </section>

  <section class="col-span-6 row-span-9 overflow-hidden rounded-xs border border-[#25272c] bg-[#181b1f]">
    <h2 class="flex h-8 items-center justify-center pb-0.5 font-medium tracking-normal">IP - Src/Dst Blocked Geo</h2>
    <div class="relative mx-2 mt-2 h-[290px] overflow-hidden bg-[#3c3c3c]">
      <svg class="h-[290px] w-[436px]" viewBox="63 150 1308 870">
        <g class="fill-[#0e0e0e] stroke-[#0e0e0e]" stroke-width="1" stroke-linejoin="round">
          <!-- Americas -->
          <path d="M63 150V250L72 252L80 247L96 250L110 258L135 275L155 292L172 325L186 348L188 385L194 398L204 414L216 424L224 440L238 458L250 474L244 456L234 440L232 432L244 440L256 458L268 484L284 493L302 500L318 508L332 516L345 528L358 535L368 541L378 543L388 538L396 528L412 526L424 532L440 530L456 538L470 550L488 552L500 562L504 572L524 576L545 584L566 598L569 610L560 626L550 640L548 660L540 678L520 686L508 700L498 716L484 734L476 736L470 746L452 754L446 768L438 790L430 806L424 822L424 842L438 858L428 862L410 854L398 838L394 815L398 780L406 740L412 700L413 670L398 656L384 634L370 606L372 586L380 570L388 555L384 545L372 543L362 536L364 520L356 516L358 504L342 506L338 498L346 482L330 486L324 496L310 494L300 482L299 462L306 449L322 444L334 446L340 441L358 442L364 452L374 466L379 462L373 446L369 434L380 420L392 410L394 396L408 382L424 372L438 360L452 352L460 356L480 348L470 342L455 340L440 348L455 334L440 330L462 322L480 314L470 298L460 292L448 276L436 262L428 270L412 256L392 250L384 258L389 272L383 288L386 306L376 319L368 306L362 292L340 287L326 276L315 258L318 236L332 224L348 214L352 200L342 192L352 180L344 168L350 150Z"/>
          <path d="M352 150L375 150L382 165L374 188L366 200L356 186ZM388 150H404L424 165L430 180L446 184L452 208L438 206L440 224L430 236L414 220L396 222L386 200L400 190L392 172ZM352 212L372 210L382 230L366 238L350 230ZM466 328L478 324L492 348L476 344Z"/>
          <path d="M490 150H618L604 168L576 182L556 206L538 226L534 250L522 248L506 226L494 206L488 180ZM614 198L624 192L634 200L648 194L658 202L652 214L636 221L620 216L626 208L616 204ZM364 478L384 476L410 488L400 491L376 485ZM410 492L434 494L438 498L412 497ZM456 832L470 833L468 838L458 837ZM1011 816L1017 816L1017 821L1011 821ZM462 933L470 927L472 934Z"/>
          <!-- Europe and Asia -->
          <path d="M738 238L746 222L762 210L776 186L796 168L820 156L832 150L846 156L858 150H876L890 172L892 190L868 188L856 196L866 210L878 208L884 196L902 190L910 172L924 178L926 190L940 174L966 166L980 168L1000 156L1010 150H1371V258L1350 262L1336 264L1318 276L1306 294L1296 298L1308 300L1322 304L1318 326L1302 350L1288 370L1270 380L1256 388L1264 400L1270 414L1262 430L1252 420L1252 400L1240 394L1222 396L1216 390L1204 400L1222 408L1218 416L1234 426L1238 444L1230 464L1212 478L1192 484L1180 488L1184 500L1184 516L1176 530L1162 542L1154 530L1146 520L1148 538L1160 560L1168 576L1156 568L1144 546L1138 524L1132 504L1120 508L1116 488L1104 476L1094 484L1076 500L1066 514L1060 534L1050 548L1040 530L1028 496L1024 484L1012 486L1000 468L984 463L960 459L940 455L926 442L910 428L914 438L928 458L940 462L948 458L956 470L972 480L962 498L944 508L920 518L904 522L898 508L884 484L866 452L862 440L870 426L872 408L852 410L836 404L828 394L832 382L856 376L882 382L902 380L890 364L886 350L866 354L868 366L854 370L848 358L838 360L832 376L818 384L826 400L814 412L804 396L794 380L780 362L770 366L778 380L798 396L788 410L782 396L764 376L752 372L738 378L732 390L718 408L700 410L680 404L678 370L714 372L716 352L702 342L722 334L736 318L748 312L756 294L754 280L768 276L766 294L786 298L806 292L826 292L830 276L822 260L838 258L858 252L838 248L816 254L808 240L810 224L822 206L818 196L802 212L792 234L796 250L786 270L776 284L768 270L764 252L752 264L740 260Z"/>
          <path d="M692 268L704 264L706 282L718 300L724 316L708 326L694 328L704 312L696 300L700 288L690 282ZM676 300L688 292L692 308L688 318L676 316ZM1322 298L1328 302L1326 330L1334 350L1324 352L1320 330ZM1316 364L1332 354L1342 362L1332 372ZM1326 376L1322 404L1312 418L1290 424L1276 434L1272 424L1296 412L1310 400L1314 378ZM1058 534L1066 540L1062 550L1056 546ZM1230 468L1236 468L1234 482L1228 478ZM1186 482L1194 486L1190 492L1184 488Z"/>
          <!-- Africa -->
          <path d="M696 414L712 414L732 408L758 404L766 408L760 420L772 430L790 440L800 428L822 434L848 438L860 438L866 460L880 490L900 520L906 532L934 528L928 546L906 572L890 590L884 600L890 620L890 646L868 662L862 690L846 716L824 732L798 734L792 718L778 690L768 652L776 626L768 598L754 582L756 560L750 552L736 552L722 546L704 554L684 556L664 540L650 524L642 510L648 490L648 474L662 452L680 436L686 420ZM932 630L934 644L918 684L906 686L902 668L910 646Z"/>
          <!-- Oceania and islands -->
          <path d="M1122 552L1134 556L1152 576L1166 594L1168 604L1152 594L1136 574ZM1166 602L1190 606L1216 610L1240 614L1238 618L1206 614L1170 608ZM1184 568L1200 562L1212 548L1222 560L1216 582L1204 592L1188 588ZM1226 572L1246 570L1232 580L1242 600L1232 594L1228 602L1224 584ZM1232 512L1242 516L1242 532L1254 540L1250 552L1238 536ZM1240 548L1256 550L1252 560L1244 558ZM1276 584L1292 584L1300 594L1318 588L1342 598L1358 620L1340 616L1324 616L1306 606L1288 598ZM1252 618L1268 614L1250 622ZM1350 598L1366 594L1364 602L1352 602ZM1204 672L1226 666L1240 652L1262 640L1276 630L1300 630L1296 646L1314 654L1322 628L1332 650L1350 664L1371 690V732L1354 752L1336 752L1322 738L1304 726L1290 718L1262 722L1244 732L1212 734L1210 716L1202 690ZM1336 766L1350 768L1346 782L1338 780Z"/>
        </g>
        <!-- Lakes and inland seas -->
        <g class="fill-[#3c3c3c]">
          <path d="M916 348L934 344L946 352L938 362L942 380L946 398L936 406L924 398L922 380L928 370ZM214 240L230 236L248 228L250 236L234 240L222 246ZM240 266L262 258L262 264L244 268ZM340 346L356 346L364 352L366 362L378 366L396 360L398 366L380 372L362 380L358 364L350 380L344 376L346 360L336 350ZM206 200L222 206L218 214L206 208ZM190 154L240 158L262 176L240 174L216 168L206 178L190 166ZM256 150H310L300 166L280 168L264 160ZM240 200L246 196L248 210L242 210ZM276 274L282 272L284 280L278 280ZM1184 290L1186 300L1170 318L1160 320L1178 304ZM862 612L870 608L870 618L862 620ZM1020 150H1034L1038 172L1032 194L1024 188L1030 172ZM1006 150L1012 150L1004 176L998 166Z"/>
        </g>
        <!-- Borders -->
        <g fill="none" class="stroke-[#3a3a3a]" stroke-width="2.600" stroke-linejoin="round">
          <path d="M116 150V185M189 345H330L346 352M396 362L410 352L428 340L440 336L446 350M218 430L240 432L262 434L284 444L296 456L304 468M326 494L330 504L324 510M336 510L352 508M348 528L360 522"/>
          <path d="M402 530L398 546L412 560L424 566L420 590L404 600M424 566L446 556L454 540M446 556L462 572L476 566L472 552M476 566L498 570M486 552L484 568M372 596L388 592L396 578L382 568M404 600L412 618L432 620L448 632L470 640L474 660L470 676L490 690L484 704L474 712L470 734M420 622L418 650L430 672L446 670L470 676M430 672L422 700L416 730L412 770L406 810L412 840L424 848M456 690L476 702L486 716M408 610L392 620L380 612"/>
          <path d="M778 286L770 260L774 230L784 200L800 176L822 168L836 164L840 186L850 210L850 236L838 250M836 164L850 156L860 172L862 188M754 312L752 330L764 342L758 356L744 352M720 334L736 342L744 352L742 366L754 372M782 298L780 318L792 330L808 336M764 342L780 340L792 330M808 336L820 322L822 296M820 322L846 318L862 326L884 336L886 350M826 290L840 286L850 300L846 318M832 274L846 278L840 286M808 336L826 340L838 358M792 344L808 344L812 362L838 364M792 344L780 352L790 366L802 376L798 388M812 362L806 372L818 382M688 374L692 392L686 406M714 374L740 378M766 352L780 352M764 342L748 346"/>
          <path d="M884 346L900 358L918 362M904 380L912 396L908 408L886 410L874 412M908 408L916 420L926 440M886 410L888 424L872 430M888 424L904 440L914 442M870 432L880 446L868 450M904 510L924 500L944 494L956 476M944 494L948 508M918 348L918 326L944 322L968 322L980 300L1012 292L1040 302L1056 318L1070 326L1086 338L1096 342M944 376L956 358L972 364L990 376L1012 384L1030 380L1036 368L1062 362L1082 364L1096 342L1110 360L1140 374L1164 378L1196 374L1204 360L1228 350L1210 340L1192 330L1170 332L1148 322L1130 330L1098 340M1228 350L1232 314L1252 308L1262 330L1290 338L1284 360L1268 380M944 388L968 400L984 410L1000 402L1010 392M956 358L972 380L990 394L1006 392L1014 398L1034 400L1030 382M984 410L974 430L986 448L978 462M986 448L1006 446L1022 430L1028 410L1044 412M1006 466L1018 468L1012 448L1034 438L1044 418L1052 430L1066 446L1094 456L1112 452L1130 446L1134 456L1118 474M1044 412L1034 400M1094 456L1096 476M1112 452L1110 470M1134 456L1140 478L1152 484L1178 482M1140 478L1134 500L1148 516M1150 486L1160 500L1174 512L1162 524L1150 520M1256 386L1244 396M1184 570L1202 572L1212 562M1318 588V616M1254 400L1262 402"/>
          <path d="M690 420L712 424L704 434L690 444L664 456M690 458L692 506L668 508M650 488H668L690 458L736 494L760 480L764 474L756 440L760 424M736 494L724 510L700 518L690 510M764 442L768 462L822 484L822 434M822 480H874M822 484L808 520L800 536L786 530L760 524L736 512L736 494M786 474V500L780 520M808 520L820 540L838 546L862 546L872 520L884 512M862 546L874 558L892 562L912 556L926 540M884 512L902 528M838 546L858 558L858 580L850 584M874 558L868 580L888 592M892 562L890 580M800 536L790 552L784 556H758M784 556L790 572L776 590L760 586M790 572L786 592L770 600M790 560L812 556L838 558L850 564L846 590L850 608L842 630L814 624L808 606L776 606M770 652L810 654L816 634M776 650L824 650L844 644L856 632L884 628M842 630L858 650L846 660L826 658L814 670L804 672L804 700L786 704M804 692L824 690L846 672L860 672M846 660L858 650M832 704L842 704L838 712L832 710ZM662 516L682 520L680 540M682 526L700 528L704 550M712 526L710 550M724 520L722 544M736 514L734 548M650 516H660M848 588L870 590M852 604L866 622"/>
        </g>
        <g class="fill-[#6c6c6c] stroke-[#1c1c1c] font-['Inter'] text-[28px] font-semibold tracking-normal" stroke-width="5" paint-order="stroke" stroke-linejoin="round">
          <text x="194" y="315" textLength="116" lengthAdjust="spacingAndGlyphs">NORTH</text><text x="183" y="352" textLength="146" lengthAdjust="spacingAndGlyphs">AMERICA</text>
          <text x="400" y="660" textLength="113" lengthAdjust="spacingAndGlyphs">SOUTH</text><text x="380" y="697" textLength="154" lengthAdjust="spacingAndGlyphs">AMERICA</text>
          <text x="733" y="537" textLength="121" lengthAdjust="spacingAndGlyphs">AFRICA</text><text x="1060" y="332" textLength="77" lengthAdjust="spacingAndGlyphs">ASIA</text><text x="1232" y="666" textLength="144" lengthAdjust="spacingAndGlyphs">OCEANIA</text>
        </g>
      </svg>
      <div class="absolute top-3 left-3 w-[30px] overflow-hidden rounded-xs bg-white text-black shadow-[0_1px_5px_rgba(0,0,0,0.65)]">
        <div class="flex h-[30px] items-center justify-center border-b border-[#ccc]"><svg class="size-[14px]" viewBox="0 0 14 14"><path d="M7 1V13M1 7H13" stroke="#000" stroke-width="2"/></svg></div>
        <div class="flex h-[30px] items-center justify-center"><svg class="size-[14px]" viewBox="0 0 14 14"><path d="M1 7H13" stroke="#000" stroke-width="2.400"/></svg></div>
      </div>
    </div>
  </section>

  <section class="col-span-3 row-span-9 overflow-hidden rounded-xs border border-[#25272c] bg-[#181b1f]">
    <h2 class="flex h-8 items-center justify-center pb-0.5 font-medium tracking-[-0.08px]">DNSBL - Blocked Domain Q...</h2>
    <div class="relative h-[300px]">
      <div class="flex h-full items-center justify-center text-[109px] leading-none font-medium tracking-normal text-[#73bf69]">374</div>
      <svg class="absolute inset-0 h-[300px] w-[221px]" viewBox="33.100 126 488 900" preserveAspectRatio="none">
        <path class="fill-[#73bf69]/20" d="M355 1026L357 872H360L362 640L365 780L368 872L371 718L374 872L376 912L379 718L382 872L387 718L390 872L395 718L398 872L403 718L406 796L410 796L412 718L415 796L419 566L422 872L427 718L430 872L435 718L439 872L444 660L449 718L453 718L455 872L460 718L463 872L466 796H480L483 718L488 796L493 757L496 796H515L517 1026Z"/>
        <path fill="none" vector-effect="non-scaling-stroke" class="stroke-[#73bf69]" stroke-width="1" d="M355 1026L357 872H360L362 640L365 780L368 872L371 718L374 872L376 912L379 718L382 872L387 718L390 872L395 718L398 872L403 718L406 796L410 796L412 718L415 796L419 566L422 872L427 718L430 872L435 718L439 872L444 660L449 718L453 718L455 872L460 718L463 872L466 796H480L483 718L488 796L493 757L496 796H515L517 1026"/>
      </svg>
    </div>
  </section>

  <section class="col-span-3 row-span-9 overflow-hidden rounded-xs border border-[#25272c] bg-[#181b1f]">
    <h2 class="flex h-8 items-center justify-center pb-0.5 font-medium tracking-[-0.1px]">DNSBL- Source IP - Top 10 ...</h2>
    <div class="grid h-[33px] grid-cols-[193px_28px] bg-[#22252b] leading-[33px] text-[#6e9fff]"><div class="border-r border-[#2d2f35] pl-1.5">Source IP</div><div class="overflow-hidden pl-1.5">Blocked</div></div>
    <div class="grid h-[35px] grid-cols-[193px_28px] border-b border-[#25272c] leading-[34px]"><div class="border-r border-[#25272c] pl-1.5">192.168.1.2</div><div class="overflow-hidden pl-1.5">374</div></div>
  </section>

  <section class="col-span-3 row-span-9 overflow-hidden rounded-xs border border-[#25272c] bg-[#181b1f]">
    <h2 class="flex h-8 items-center justify-center pb-0.5 font-medium tracking-[-0.1px]">DNSBL - Top 10 Blocked Do...</h2>
    <div class="h-[33px] bg-[#22252b] pl-1.5 leading-[33px] text-[#6e9fff]">TLD</div>
    <div class="h-[35px] border-b border-[#25272c] pl-1.5 leading-[34px]">ads.mopub.com</div>
    <div class="h-[35px] border-b border-[#25272c] pl-1.5 leading-[34px]">app-measurement.com</div>
    <div class="h-[35px] border-b border-[#25272c] pl-1.5 leading-[34px] tracking-[0.1px] whitespace-nowrap">firebaselogging-pa.googleapis.c...</div>
    <div class="h-[35px] border-b border-[#25272c] pl-1.5 leading-[34px]">adservice.google.com</div>
    <div class="h-[35px] border-b border-[#25272c] pl-1.5 leading-[34px]">alb.reddit.com</div>
    <div class="h-[35px] border-b border-[#25272c] pl-1.5 leading-[34px]">telemetry.dropbox.com</div>
  </section>
</main>
</body>
</html>
